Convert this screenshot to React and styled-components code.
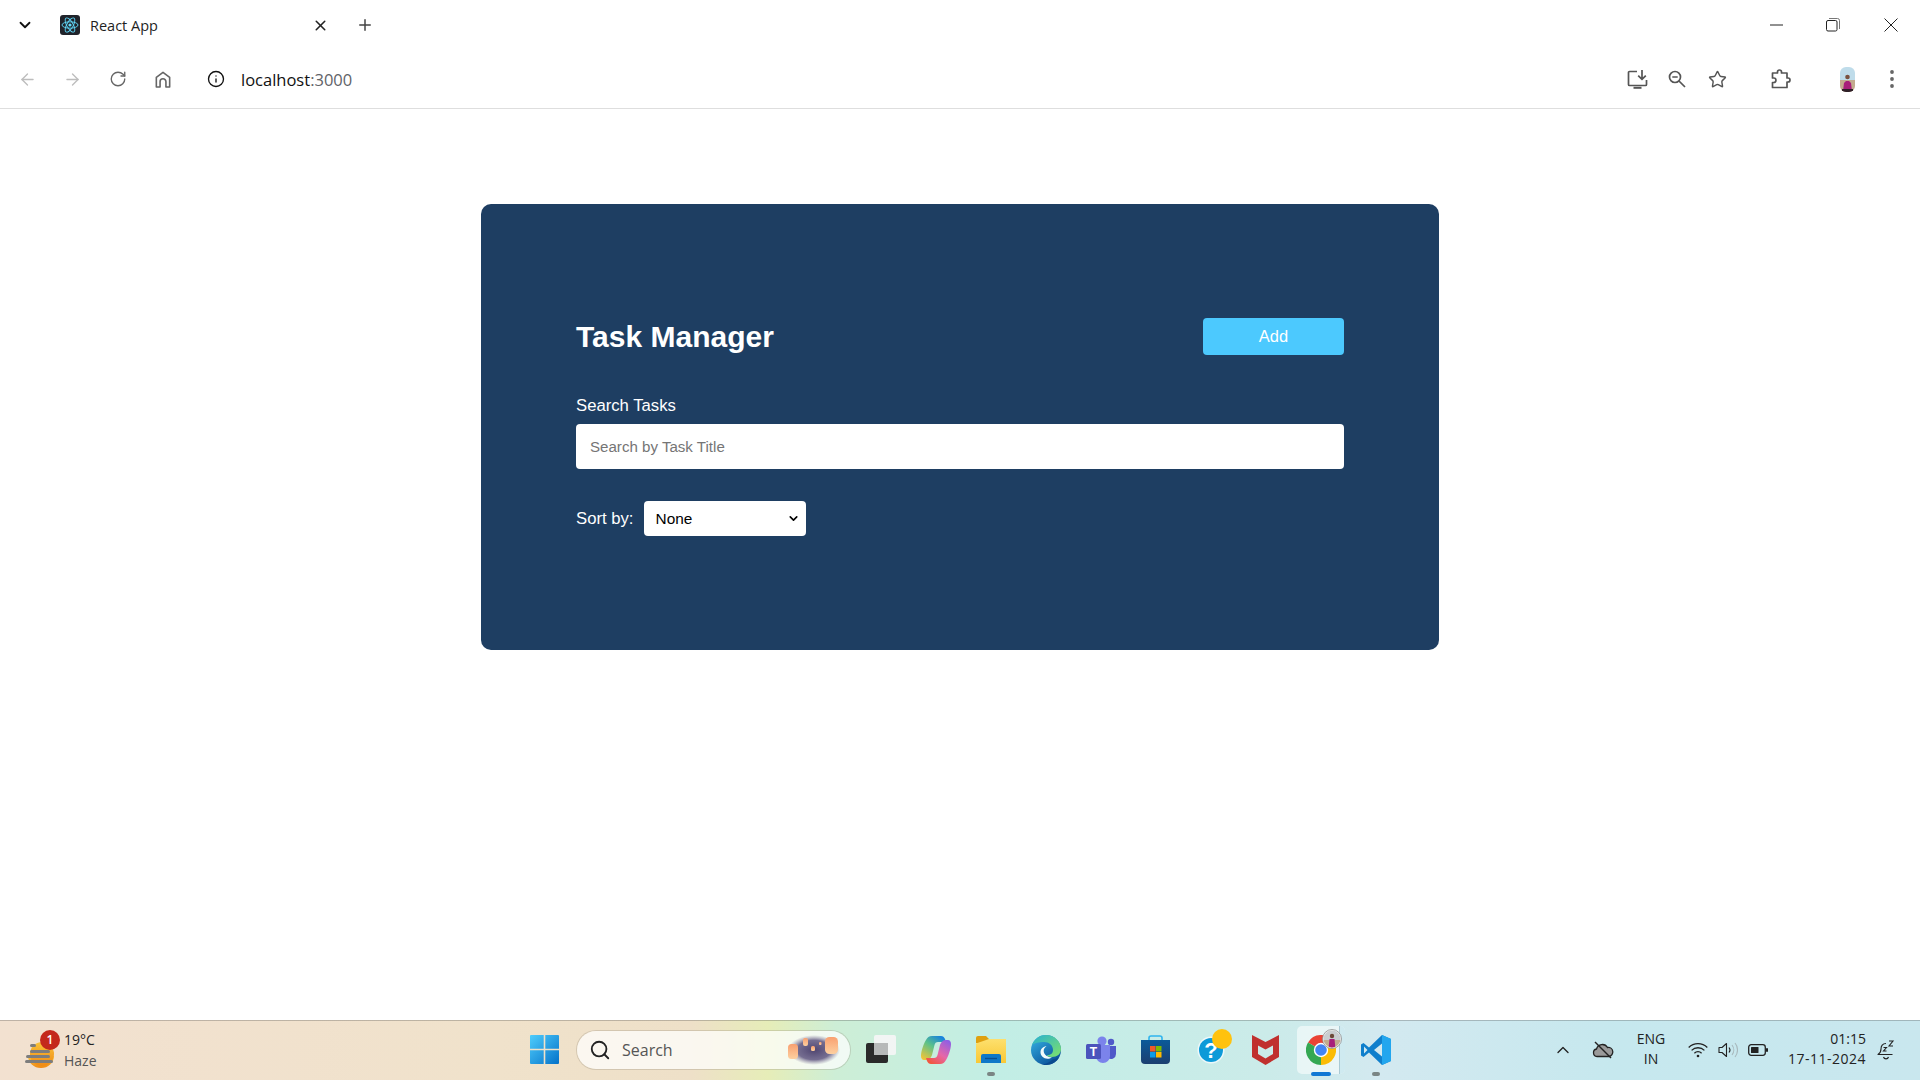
import React from 'react';
import styled, { createGlobalStyle } from 'styled-components';
import { ArrowLeft, ArrowRight, RotateCw, Info, Star, ChevronDown, ChevronUp, X, Plus, Search } from 'lucide-react';

const GlobalStyle = createGlobalStyle`
  html, body { margin: 0; padding: 0; background: #fff; }
  * { box-sizing: border-box; }
`;

const Screen = styled.div`
  width: 1920px;
  height: 1080px;
  display: flex;
  flex-direction: column;
  overflow: hidden;
  background: #fff;
  font-family: "Liberation Sans", Arial, sans-serif;
`;

/* browser chrome */
const TabStrip = styled.div`
  height: 50px;
  display: flex;
  align-items: center;
  flex: none;
`;

const Slot = styled.div`
  width: ${p => p.$w}px;
  height: 100%;
  flex: none;
  display: flex;
  align-items: center;
  justify-content: center;
  margin-left: ${p => p.$ml || 0}px;
  color: ${p => p.$color || '#444'};
`;

const Tab = styled.div`
  width: 290px;
  display: flex;
  align-items: center;
  gap: 10px;
  padding: 0 10px;
`;

const TabTitle = styled.span`
  flex: 1;
  font-family: "Open Sans", sans-serif;
  font-size: 14.5px;
  color: #1f1f1f;
`;

const WindowControls = styled.div`
  margin-left: auto;
  height: 100%;
  display: flex;
`;

const NavBar = styled.div`
  height: 59px;
  flex: none;
  display: flex;
  align-items: center;
  padding: 0 8px 0 5px;
  border-bottom: 1px solid #dedede;
`;

const Url = styled.div`
  margin-left: 3px;
  font-family: "Open Sans", sans-serif;
  font-size: 16.5px;
  color: #111;
  span { color: #5f6368; }
`;

const NavRight = styled.div`
  margin-left: auto;
  height: 100%;
  display: flex;
`;

/* page */
const Main = styled.main`
  flex: 1;
  display: flex;
  justify-content: center;
  align-items: flex-start;
  padding-top: 95px;
`;

const Card = styled.section`
  width: 958px;
  height: 446px;
  padding: 114px 95px;
  background: #1e3e62;
  border-radius: 10px;
  color: #fff;
`;

const Header = styled.div`
  display: flex;
  align-items: center;
  justify-content: space-between;
  margin-bottom: 41px;
`;

const Title = styled.h1`
  margin: 0;
  font-size: 30px;
  font-weight: 700;
`;

const AddButton = styled.button`
  width: 141px;
  height: 37px;
  border: 0;
  border-radius: 4px;
  background: #4cc9fe;
  color: #fff;
  font: 16.5px "Liberation Sans", Arial, sans-serif;
`;

const SearchLabel = styled.label`
  display: block;
  font-size: 16.7px;
  line-height: 19px;
  margin-bottom: 9px;
`;

const SearchInput = styled.input`
  display: block;
  width: 100%;
  height: 45px;
  padding: 0 14px;
  border: 0;
  border-radius: 4px;
  background: #fff;
  font: 15.1px "Liberation Sans", Arial, sans-serif;
  &::placeholder { color: #757575; }
`;

const SortRow = styled.div`
  display: flex;
  align-items: center;
  gap: 10px;
  margin-top: 32px;
  font-size: 16.7px;
`;

const SelectWrap = styled.div`
  position: relative;
  width: 162px;
  height: 35px;
  display: flex;
  svg {
    position: absolute;
    right: 6px;
    top: 11px;
    color: #000;
    pointer-events: none;
  }
`;

const SortSelect = styled.select`
  width: 100%;
  height: 100%;
  appearance: none;
  padding: 0 12px;
  border: 0;
  border-radius: 4px;
  background: #fff;
  color: #000;
  font: 15.4px "Liberation Sans", Arial, sans-serif;
`;

/* taskbar */
const Taskbar = styled.footer`
  height: 60px;
  flex: none;
  display: flex;
  align-items: center;
  padding-bottom: 2px;
  border-top: 1px solid rgba(70, 70, 70, 0.3);
  background: linear-gradient(90deg, #f2e1d0 0%, #f0e2cb 26%, #eee0c8 36%, #e6edb8 40%, #cdeed6 43.5%, #c2eee5 52%, #cbebe9 66%, #d3e9f0 72%, #c6e8ee 84%, #c9e7ee 100%);
  font-family: "Open Sans", "Noto Sans", sans-serif;
  color: #222;
`;

const Weather = styled.div`
  width: 517px;
  height: 100%;
  flex: none;
  display: flex;
  align-items: center;
  padding-left: 25px;
  gap: 9px;
`;

const WeatherIcon = styled.div`
  position: relative;
  width: 30px;
  height: 36px;
  flex: none;
`;

const Badge = styled.span`
  position: absolute;
  top: -2px;
  right: -5px;
  width: 20px;
  height: 20px;
  border-radius: 50%;
  background: #c4281c;
  color: #fff;
  font-size: 12px;
  font-weight: 600;
  display: flex;
  align-items: center;
  justify-content: center;
`;

const WeatherText = styled.div`
  font-size: 14px;
  line-height: 21px;
  span { display: block; color: #555; }
`;

const TaskSlot = styled.div`
  position: relative;
  width: 55px;
  height: 48px;
  flex: none;
  display: flex;
  align-items: center;
  justify-content: center;
`;

const ActiveTile = styled(TaskSlot)`
  width: 48px;
  margin: 0 3.5px;
  border-radius: 5px;
  background: rgba(255, 255, 255, 0.55);
  &::after {
    content: '';
    position: absolute;
    top: 0;
    right: 0;
    bottom: 0;
    width: 5px;
    border-left: 1px solid rgba(140, 175, 190, 0.55);
    border-radius: 0 5px 5px 0;
    background: #cfeaf0;
  }
`;

const RunDot = styled.span`
  position: absolute;
  left: ${p => (p.$active ? 24 : 27.5)}px;
  bottom: -2px;
  transform: translateX(-50%);
  width: ${p => (p.$active ? 20 : 8)}px;
  height: 4px;
  border-radius: 2px;
  background: ${p => (p.$active ? '#0f78d4' : '#7a8584')};
`;

const Overlay = styled.span`
  position: absolute;
  z-index: 1;
  display: flex;
  top: ${p => p.$top}px;
  right: ${p => p.$right}px;
`;

const SearchBox = styled.div`
  position: relative;
  width: 273px;
  height: 38px;
  margin: 0 3px 0 5px;
  flex: none;
  display: flex;
  align-items: center;
  gap: 11px;
  padding-left: 12px;
  border-radius: 19px;
  background: rgba(255, 255, 255, 0.72);
  box-shadow: 0 0 0 1px rgba(140, 130, 110, 0.28);
  font-size: 16px;
  color: #555;
`;

const Tray = styled.div`
  margin-left: auto;
  height: 100%;
  display: flex;
  padding-right: 14px;
`;

const TrayText = styled.div`
  width: ${p => p.$w}px;
  flex: none;
  align-self: center;
  padding-bottom: 2px;
  font-size: 14px;
  line-height: 20px;
  text-align: ${p => p.$align};
  color: #222;
`;

const DateLine = styled.span`
  display: block;
  letter-spacing: 0.5px;
`;

const BackIcon = () => <ArrowLeft size={19} strokeWidth={1.7} />;
const ForwardIcon = () => <ArrowRight size={19} strokeWidth={1.7} />;

const ReactFavicon = () => (
  <svg width="20" height="20" viewBox="0 0 20 20">
    <rect width="20" height="20" rx="3" fill="#20232a" />
    <g fill="none" stroke="#61dafb" strokeWidth="0.9">
      <ellipse cx="10" cy="10" rx="8" ry="3.2" />
      <ellipse cx="10" cy="10" rx="8" ry="3.2" transform="rotate(60 10 10)" />
      <ellipse cx="10" cy="10" rx="8" ry="3.2" transform="rotate(120 10 10)" />
    </g>
    <circle cx="10" cy="10" r="1.6" fill="#61dafb" />
  </svg>
);

const MinimizeIcon = () => (
  <svg width="14" height="2" viewBox="0 0 14 2"><path d="M0 1h13" stroke="#222" strokeWidth="1" /></svg>
);

const RestoreIcon = () => (
  <svg width="14" height="14" viewBox="0 0 14 14" fill="none" stroke="#222" strokeWidth="1">
    <rect x="0.5" y="2.5" width="10.5" height="10.5" rx="1.5" />
    <path d="M3 .5h8.5a2 2 0 0 1 2 2V11" stroke="#777" />
  </svg>
);

const WindowClose = () => (
  <svg width="14" height="14" viewBox="0 0 14 14"><path d="M.5.5l13 13M13.5.5l-13 13" stroke="#222" strokeWidth="1" /></svg>
);

const HomeIcon = () => (
  <svg width="16" height="17" viewBox="0 0 18 19" fill="none" stroke="#666" strokeWidth="1.8">
    <path d="M1.5 18V7.2L9 1.5l7.5 5.700V18h-4.200v-6a3.300 3.300 0 0 0-6.600 0v6z" strokeLinejoin="round" />
  </svg>
);

const InstallIcon = () => (
  <svg width="21" height="19" viewBox="0 0 21 19" fill="none" stroke="#555" strokeWidth="1.7">
    <path d="M10 1.500H2.500a1 1 0 0 0-1 1v12a1 1 0 0 0 1 1h16a1 1 0 0 0 1-1V10" />
    <path d="M15 0v9M11.200 5.600L15 9.400l3.800-3.800" />
    <path d="M6.500 17.800h8" strokeWidth="2" />
  </svg>
);

const ZoomOutIcon = () => (
  <svg width="18" height="18" viewBox="0 0 18 18" fill="none" stroke="#555" strokeWidth="1.7">
    <circle cx="7" cy="7" r="5.500" />
    <path d="M11 11l6 6M4.300 7h5.400" />
  </svg>
);

const PuzzleIcon = () => (
  <svg width="21" height="20" viewBox="0 0 21 20" fill="none" stroke="#555" strokeWidth="1.7" strokeLinejoin="round">
    <path d="M1.500 4h5V3a2 2 0 0 1 4 0v1h5.500v5h1a2 2 0 0 1 0 4h-1v5.500H1.500v-5h1.200a2.200 2.200 0 0 0 0-4.500H1.500z" />
  </svg>
);

const Avatar = () => (
  <svg width="15" height="25" viewBox="0 0 15 25">
    <defs>
      <clipPath id="avatarClip"><rect width="15" height="25" rx="6" /></clipPath>
    </defs>
    <g clipPath="url(#avatarClip)">
      <rect width="15" height="14" fill="#bfdcea" />
      <rect y="13" width="15" height="12" fill="#c2ab8e" />
      <path d="M3 24l1-8 2-2h3l2 2 1 8z" fill="#a81f7a" />
      <path d="M2 25v-3h11v3z" fill="#2f2028" />
      <circle cx="7.500" cy="10" r="2.300" fill="#7a5240" />
    </g>
  </svg>
);

const KebabIcon = () => (
  <svg width="4" height="18" viewBox="0 0 4 18" fill="#666">
    <circle cx="2" cy="2" r="1.900" /><circle cx="2" cy="9" r="1.900" /><circle cx="2" cy="16" r="1.900" />
  </svg>
);

const HazeIcon = () => (
  <svg width="30" height="36" viewBox="0 0 30 36">
    <defs>
      <linearGradient id="sun" x1="0" y1="0" x2="0" y2="1">
        <stop offset="0" stopColor="#f9c33a" /><stop offset="1" stopColor="#f08a14" />
      </linearGradient>
    </defs>
    <path d="M3 24h26a13 12 0 0 1-13 12A13 12 0 0 1 3 24z" fill="url(#sun)" />
    <circle cx="17" cy="22" r="12" fill="url(#sun)" />
    <g fill="#7d7d7d">
      <rect x="5" y="12" width="6" height="3" rx="1.500" />
      <rect x="5" y="18" width="20" height="3" rx="1.500" />
      <rect x="1" y="23" width="24" height="3" rx="1.500" />
      <rect x="0" y="28" width="28" height="3" rx="1.500" />
    </g>
  </svg>
);

const WindowsLogo = () => (
  <svg width="29" height="29" viewBox="0 0 29 29">
    <defs>
      <linearGradient id="win" x1="0" y1="0" x2="1" y2="1">
        <stop offset="0" stopColor="#4fcdfc" /><stop offset="1" stopColor="#0572c9" />
      </linearGradient>
    </defs>
    <path d="M0 1a1 1 0 0 1 1-1h12.700v13.700H0zM15.300 0H28a1 1 0 0 1 1 1v12.700H15.300zM0 15.300h13.700V29H1a1 1 0 0 1-1-1zM15.300 15.300H29V28a1 1 0 0 1-1 1H15.300z" fill="url(#win)" />
  </svg>
);

const Lanterns = () => (
  <svg width="54" height="30" viewBox="0 0 54 30">
    <defs>
      <radialGradient id="dusk">
        <stop offset="0" stopColor="#4f4570" /><stop offset="0.65" stopColor="#5f5580" stopOpacity="0.85" /><stop offset="1" stopColor="#8a80a0" stopOpacity="0" />
      </radialGradient>
      <linearGradient id="lamp" x1="0" y1="0" x2="0" y2="1">
        <stop offset="0" stopColor="#f9a070" /><stop offset="1" stopColor="#fdd0a0" />
      </linearGradient>
    </defs>
    <ellipse cx="28" cy="15" rx="26" ry="15" fill="url(#dusk)" />
    <rect x="2" y="9" width="10" height="15" rx="3.500" fill="url(#lamp)" />
    <rect x="17" y="3" width="5" height="8" rx="2" fill="url(#lamp)" />
    <rect x="25" y="11" width="4" height="5" rx="1.500" fill="url(#lamp)" />
    <rect x="33" y="7" width="2.500" height="3" rx="1" fill="url(#lamp)" />
    <rect x="39" y="2" width="13" height="17" rx="4.500" fill="url(#lamp)" />
  </svg>
);

const TaskViewIcon = () => (
  <svg width="30" height="29" viewBox="0 0 30 29">
    <rect x="0" y="8" width="22" height="20" rx="2" fill="#2a2a2a" />
    <rect x="8" y="0" width="22" height="20" rx="2" fill="#f2f5f4" />
    <rect x="8" y="8" width="14" height="12" fill="#b7b9b9" />
  </svg>
);

const CopilotIcon = () => (
  <svg width="30" height="28" viewBox="0 0 30 28">
    <defs>
      <linearGradient id="copA" x1="0.8" y1="0" x2="0.1" y2="1">
        <stop offset="0" stopColor="#1580e0" /><stop offset="0.45" stopColor="#5cc28a" /><stop offset="1" stopColor="#f6c533" />
      </linearGradient>
      <linearGradient id="copB" x1="0.9" y1="0" x2="0.2" y2="1">
        <stop offset="0" stopColor="#8a5ee8" /><stop offset="0.55" stopColor="#e667a8" /><stop offset="1" stopColor="#f2553a" />
      </linearGradient>
    </defs>
    <path d="M11 0h9c2 0 3 1 4 3l1 3h-8c-2 0-3 1-3.500 3L11 19c-1 3-3 5-6 5H3c-2 0-3-2-3-4 0-5 3-13 5-16 1.500-2.500 3-4 6-4z" fill="url(#copA)" />
    <path d="M19 28h-9c-2 0-3-1-4-3l-1-3h8c2 0 3-1 3.500-3L19 9c1-3 3-5 6-5h2c2 0 3 2 3 4 0 5-3 13-5 16-1.500 2.500-3 4-6 4z" fill="url(#copB)" />
  </svg>
);

const FolderIcon = () => (
  <svg width="30" height="27" viewBox="0 0 30 27">
    <defs>
      <linearGradient id="folderBody" x1="0" y1="0" x2="0" y2="1">
        <stop offset="0" stopColor="#fde06e" /><stop offset="1" stopColor="#f9c834" />
      </linearGradient>
    </defs>
    <path d="M0 2a2 2 0 0 1 2-2h8l3 3h17v4H0z" fill="#dfa00f" />
    <path d="M0 7.500L13 3h17v24H0z" fill="url(#folderBody)" />
    <path d="M5 27v-7a2 2 0 0 1 2-2h16a2 2 0 0 1 2 2v7z" fill="#0f78c8" />
    <path d="M9 22.500h12" stroke="#0a4f91" strokeWidth="1.400" />
  </svg>
);

const EdgeIcon = () => (
  <svg width="30" height="30" viewBox="0 0 30 30">
    <defs>
      <linearGradient id="edgeA" x1="0" y1="0" x2="0.7" y2="1">
        <stop offset="0" stopColor="#38b8e8" /><stop offset="1" stopColor="#0a4f98" />
      </linearGradient>
      <linearGradient id="edgeB" x1="0" y1="0" x2="1" y2="1">
        <stop offset="0" stopColor="#27b0d0" /><stop offset="1" stopColor="#7fe26a" />
      </linearGradient>
    </defs>
    <circle cx="15" cy="15" r="15" fill="url(#edgeA)" />
    <path d="M1 10C4 3 9 0 15 0c9 0 15 7 15 14 0 5-4 8-9 8-3 0-5-1-5-2 4 0 6-2 6-5 0-5-4-8-9-8-5 0-10 1-12 3z" fill="url(#edgeB)" />
    <path d="M21 22.500c-1.500 1-3 1.300-4.500 1.300-4 0-7-3-7-6.500 0-3.500 3-6 6-6-2 1-3 3-2.800 5 .3 3.600 4 6 8.300 6.200z" fill="#f2fbfb" />
    <path d="M22 24c3 .5 5-1 6.500-2.500C26 27 21 30 15 30c-2 0-4-.4-5-1 5 1 9-2 12-5z" fill="#0b4a8f" />
  </svg>
);

const TeamsIcon = () => (
  <svg width="30" height="27" viewBox="0 0 30 27">
    <circle cx="16" cy="5" r="4.600" fill="#7b83eb" />
    <circle cx="25" cy="6" r="3.200" fill="#5059c9" />
    <path d="M20 10h10v8a5 5 0 0 1-8 4z" fill="#5059c9" />
    <path d="M9 9h15v11a7 7 0 0 1-14 0z" fill="#7b83eb" />
    <rect x="0" y="8" width="15" height="15" rx="1.500" fill="#4b53bc" />
    <text x="7.500" y="20" textAnchor="middle" fontFamily="Liberation Sans" fontWeight="700" fontSize="12" fill="#fff">T</text>
  </svg>
);

const StoreIcon = () => (
  <svg width="29" height="29" viewBox="0 0 29 29">
    <defs>
      <linearGradient id="bag" x1="0" y1="0" x2="0" y2="1">
        <stop offset="0" stopColor="#0a5a9a" /><stop offset="1" stopColor="#1c3f70" />
      </linearGradient>
    </defs>
    <path d="M8 6V3a2 2 0 0 1 2-2h9a2 2 0 0 1 2 2v3" fill="none" stroke="#2fb4ee" strokeWidth="1.600" />
    <path d="M0 5h29v20a4 4 0 0 1-4 4H4a4 4 0 0 1-4-4z" fill="url(#bag)" />
    <rect x="9" y="11" width="5.500" height="5.500" fill="#f05a28" />
    <rect x="15" y="11" width="5.500" height="5.500" fill="#7fba00" />
    <rect x="9" y="17" width="5.500" height="5.500" fill="#0b9be8" />
    <rect x="15" y="17" width="5.500" height="5.500" fill="#ffb900" />
  </svg>
);

const HelpIcon = () => (
  <svg width="28" height="28" viewBox="0 0 28 28">
    <circle cx="14" cy="14" r="13.500" fill="#ecf8fa" />
    <circle cx="14" cy="14" r="12" fill="#0d9ad8" />
    <text x="14" y="22" textAnchor="middle" fontFamily="Liberation Sans" fontWeight="700" fontSize="22" fill="#fff">?</text>
  </svg>
);

const YellowDot = styled.span`
  width: 20px;
  height: 20px;
  border-radius: 50%;
  background: #ffc20e;
`;

const McAfeeIcon = () => (
  <svg width="27" height="30" viewBox="0 0 27 30">
    <path fillRule="evenodd" d="M0 0l13.500 7L27 0v22l-13.500 8L0 22zM6 10.500v8.500l7.500 4.500L21 19v-8.500l-7.500 4z" fill="#c0302e" />
  </svg>
);

const ChromeIcon = () => (
  <svg width="30" height="30" viewBox="0 0 30 30">
    <path d="M15 15L2 7.500A15 15 0 0 1 28 7.500z" fill="#ea4335" />
    <path d="M15 15L28 7.500A15 15 0 0 1 15 30z" fill="#fbbc04" />
    <path d="M15 15v15A15 15 0 0 1 2 7.500z" fill="#34a853" />
    <circle cx="15" cy="15" r="7.200" fill="#fff" />
    <circle cx="15" cy="15" r="5.800" fill="#4285f4" />
  </svg>
);

const ChromeProfile = () => (
  <svg width="20" height="20" viewBox="0 0 20 20">
    <defs>
      <clipPath id="profileClip"><circle cx="10" cy="10" r="8.500" /></clipPath>
    </defs>
    <circle cx="10" cy="10" r="9.500" fill="#f2f2f2" stroke="#8d8d8d" strokeWidth="0.800" />
    <g clipPath="url(#profileClip)">
      <rect width="20" height="11" fill="#c9cdd0" />
      <rect y="11" width="20" height="9" fill="#c2ab8e" />
      <path d="M6.500 20l1-10h5l1 10z" fill="#a81f7a" />
      <circle cx="10" cy="7" r="2.200" fill="#6c4838" />
    </g>
  </svg>
);

const VSCodeIcon = () => (
  <svg width="30" height="30" viewBox="0 0 30 30">
    <path fillRule="evenodd" d="M21 0l9 4v22l-9 4-13-12.500L2.500 22 0 20.500v-11L2.500 8 8 12.500zM21 8.500L13 15l8 6.500zM3 11.500v7L6.500 15z" fill="#0f7fcc" />
    <path d="M21 0l9 4v22l-9 4V21.500L21 8.500z" fill="#22a6ee" />
  </svg>
);

const CloudOffIcon = () => (
  <svg width="22" height="18" viewBox="0 0 22 18">
    <path d="M5 15.500a3.800 3.800 0 0 1-.5-7.500A6 6 0 0 1 15.500 6.500 4.500 4.500 0 0 1 17 15.500z" fill="#9a9a9a" stroke="#222" strokeWidth="1.300" />
    <path d="M3 1l16 16" stroke="#222" strokeWidth="1.500" />
  </svg>
);

const WifiIcon = () => (
  <svg width="20" height="16" viewBox="0 0 20 16" fill="none" stroke="#222" strokeWidth="1.300">
    <path d="M.7 5.500a13 13 0 0 1 18.600 0M3.600 8.400a9 9 0 0 1 12.800 0M6.400 11.200a5 5 0 0 1 7.200 0" />
    <circle cx="10" cy="14" r="1.300" fill="#222" stroke="none" />
  </svg>
);

const SpeakerIcon = () => (
  <svg width="20" height="16" viewBox="0 0 20 16" fill="none" stroke="#222" strokeWidth="1.100">
    <path d="M1 5.500h3L8.500 1.500v13L4 10.500H1z" strokeLinejoin="round" />
    <path d="M11 5.500a4 4 0 0 1 0 5" />
    <path d="M14 3a8 8 0 0 1 0 10M17 1a11 11 0 0 1 0 14" stroke="#a8b8bc" />
  </svg>
);

const BatteryIcon = () => (
  <svg width="20" height="12" viewBox="0 0 20 12">
    <rect x="0.700" y="0.700" width="16.600" height="10.600" rx="2.500" fill="none" stroke="#222" strokeWidth="1.300" />
    <rect x="3" y="3" width="7.500" height="6" rx="0.500" fill="#222" />
    <rect x="18" y="4" width="2" height="4" rx="1" fill="#222" />
  </svg>
);

const BellSnoozeIcon = () => (
  <svg width="18" height="20" viewBox="0 0 18 20" fill="none" stroke="#222" strokeWidth="1.100">
    <path d="M9 3.500C5.500 3.500 4 6 4 9c0 3-1.500 4.500-3 5.500h14.500" strokeLinejoin="round" />
    <path d="M6.500 17a2.600 2.600 0 0 0 5 0" />
    <path d="M6.500 7.500h3l-3 3.500h3M12 1h4l-4 5h4" />
  </svg>
);

const taskApps = [
  { key: 'taskview', icon: <TaskViewIcon /> },
  { key: 'copilot', icon: <CopilotIcon /> },
  { key: 'folder', icon: <FolderIcon />, running: true },
  { key: 'edge', icon: <EdgeIcon /> },
  { key: 'teams', icon: <TeamsIcon /> },
  { key: 'store', icon: <StoreIcon /> },
  { key: 'help', icon: <HelpIcon />, overlay: <Overlay $top={3} $right={6}><YellowDot /></Overlay> },
  { key: 'mcafee', icon: <McAfeeIcon /> },
];

const App = () => {
  return (
    <Screen>
      <GlobalStyle />
      <TabStrip>
        <Slot $w={50} $color="#111"><ChevronDown size={18} strokeWidth={2.4} /></Slot>
        <Tab>
          <ReactFavicon />
          <TabTitle>React App</TabTitle>
          <Slot $w={20} $color="#222"><X size={17} strokeWidth={2.2} /></Slot>
        </Tab>
        <Slot $w={50}><Plus size={18} strokeWidth={2} /></Slot>
        <WindowControls>
          <Slot $w={56}><MinimizeIcon /></Slot>
          <Slot $w={56}><RestoreIcon /></Slot>
          <Slot $w={59}><WindowClose /></Slot>
        </WindowControls>
      </TabStrip>

      <NavBar>
        <Slot $w={45} $color="#bdbdbd"><BackIcon /></Slot>
        <Slot $w={45} $color="#bdbdbd"><ForwardIcon /></Slot>
        <Slot $w={45} $color="#666"><RotateCw size={18} strokeWidth={1.8} /></Slot>
        <Slot $w={45}><HomeIcon /></Slot>
        <Slot $w={45} $ml={8} $color="#111"><Info size={18} strokeWidth={1.8} /></Slot>
        <Url>localhost<span>:3000</span></Url>
        <NavRight>
          <Slot $w={40}><InstallIcon /></Slot>
          <Slot $w={40}><ZoomOutIcon /></Slot>
          <Slot $w={40} $color="#555"><Star size={19} strokeWidth={1.8} /></Slot>
          <Slot $w={40} $ml={24}><PuzzleIcon /></Slot>
          <Slot $w={50} $ml={21}><Avatar /></Slot>
          <Slot $w={40}><KebabIcon /></Slot>
        </NavRight>
      </NavBar>

      <Main>
        <Card>
          <Header>
            <Title>Task Manager</Title>
            <AddButton>Add</AddButton>
          </Header>
          <SearchLabel htmlFor="search">Search Tasks</SearchLabel>
          <SearchInput id="search" placeholder="Search by Task Title" />
          <SortRow>
            <span>Sort by:</span>
            <SelectWrap>
              <SortSelect defaultValue="none">
                <option value="none">None</option>
                <option value="title">Title</option>
              </SortSelect>
              <ChevronDown size={13} strokeWidth={3} />
            </SelectWrap>
          </SortRow>
        </Card>
      </Main>

      <Taskbar>
        <Weather>
          <WeatherIcon>
            <HazeIcon />
            <Badge>1</Badge>
          </WeatherIcon>
          <WeatherText>19°C<span>Haze</span></WeatherText>
        </Weather>
        <TaskSlot><WindowsLogo /></TaskSlot>
        <SearchBox>
          <Search size={22} strokeWidth={2} color="#222" />
          Search
          <Overlay $top={4} $right={10}><Lanterns /></Overlay>
        </SearchBox>
        {taskApps.map(app => (
          <TaskSlot key={app.key}>
            {app.icon}
            {app.overlay}
            {app.running && <RunDot />}
          </TaskSlot>
        ))}
        <ActiveTile>
          <ChromeIcon />
          <Overlay $top={3} $right={3}><ChromeProfile /></Overlay>
          <RunDot $active />
        </ActiveTile>
        <TaskSlot>
          <VSCodeIcon />
          <RunDot />
        </TaskSlot>
        <Tray>
          <Slot $w={40} $color="#222"><ChevronUp size={20} strokeWidth={1.6} /></Slot>
          <Slot $w={40}><CloudOffIcon /></Slot>
          <TrayText $w={56} $align="center">ENG<br />IN</TrayText>
          <Slot $w={38}><WifiIcon /></Slot>
          <Slot $w={22}><SpeakerIcon /></Slot>
          <Slot $w={38}><BatteryIcon /></Slot>
          <TrayText $w={89} $align="right">01:15<DateLine>17-11-2024</DateLine></TrayText>
          <Slot $w={40}><BellSnoozeIcon /></Slot>
        </Tray>
      </Taskbar>
    </Screen>
  );
};

export default App;
